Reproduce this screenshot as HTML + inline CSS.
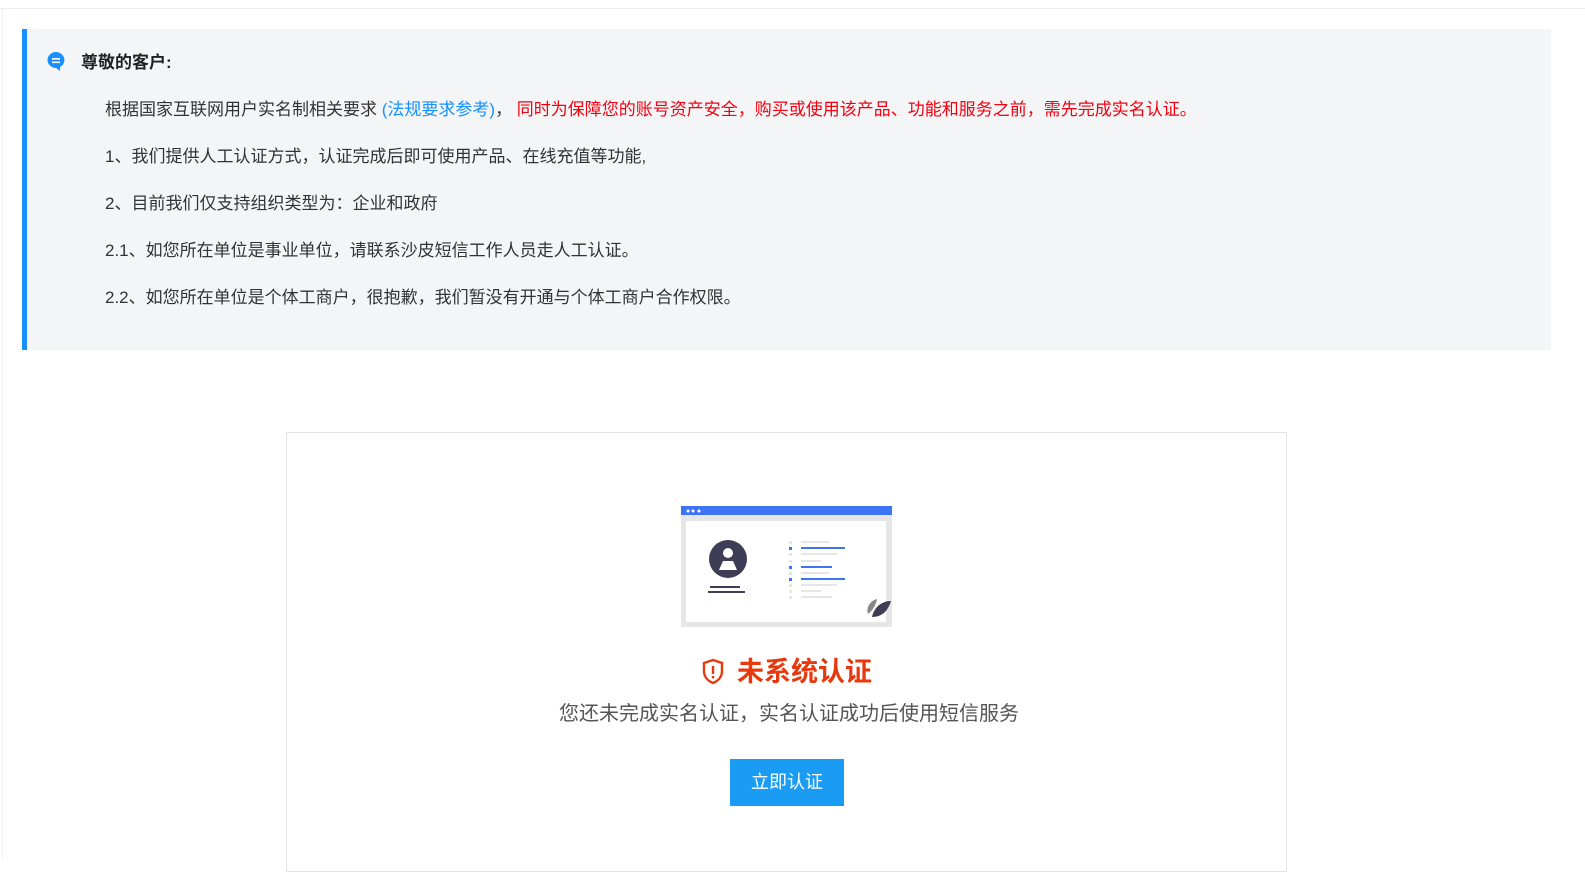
<!DOCTYPE html>
<html><head><meta charset="utf-8"><style>
body{margin:0;width:1585px;height:859px;background:#fff;font-family:"Liberation Sans","Noto Sans CJK SC",sans-serif;position:relative;overflow:hidden;color:#333}
.top{position:absolute;left:0;top:8px;width:1585px;height:1px;background:#eee}
.lft{position:absolute;left:2px;top:9px;width:1px;height:850px;background:#f0f0f0}
.note{position:absolute;left:22px;top:29px;width:1529px;height:321px;background:#f4f5f7;border-left:5px solid #1890ff;box-sizing:border-box}
.t{position:absolute;font-size:17px;white-space:nowrap;line-height:20px}
.card{position:absolute;left:286px;top:432px;width:1001px;height:440px;border:1px solid #e4e4e4;box-sizing:border-box}
.btn{position:absolute;left:730px;top:759px;width:114px;height:47px;background:#1a9cf5;color:#fff;font-size:18px;text-align:center;line-height:47px}
</style></head><body>
<div class="top"></div><div class="lft"></div>
<div class="note"></div>
<svg style="position:absolute;left:46px;top:51px" width="20" height="20" viewBox="0 0 20 20"><path d="M10 1a8.5 8 0 1 0 0 16l4 3v-4A8.5 8 0 0 0 10 1z" fill="#1890ff"/><rect x="6" y="7" width="8" height="1.6" fill="#fff"/><rect x="6" y="10.5" width="8" height="1.6" fill="#fff"/></svg>
<div class="t" style="left:81px;top:53px;font-weight:bold;color:#222">尊敬的客户:</div>
<div class="t" style="left:105px;top:100px">根据国家互联网用户实名制相关要求 <span style="color:#1890ff">(法规要求参考)</span>，&nbsp;<span style="color:#f5000f">同时为保障您的账号资产安全，购买或使用该产品、功能和服务之前，需先完成实名认证。</span></div>
<div class="t" style="left:105px;top:147px">1、我们提供人工认证方式，认证完成后即可使用产品、在线充值等功能,</div>
<div class="t" style="left:105px;top:194px">2、目前我们仅支持组织类型为：企业和政府</div>
<div class="t" style="left:105px;top:241px">2.1、如您所在单位是事业单位，请联系沙皮短信工作人员走人工认证。</div>
<div class="t" style="left:105px;top:288px">2.2、如您所在单位是个体工商户，很抱歉，我们暂没有开通与个体工商户合作权限。</div>
<div class="card"></div>
<svg style="position:absolute;left:681px;top:506px" width="211" height="121" viewBox="0 0 211 121">
<rect x="0" y="0" width="211" height="121" fill="#e6e6e6"/><rect x="0" y="0" width="211" height="9" fill="#3d73f5"/>
<circle cx="7" cy="5" r="1.5" fill="#fff"/><circle cx="12" cy="5" r="1.5" fill="#fff"/><circle cx="18" cy="5" r="1.5" fill="#fff"/>
<rect x="5" y="15" width="200" height="101" fill="#fff"/>
<circle cx="47" cy="53" r="19" fill="#3f3d56"/><circle cx="47" cy="47" r="5" fill="#fff"/><path d="M38 64l4-9h10l4 9z" fill="#fff"/>
<rect x="29" y="80" width="30" height="2" fill="#3f3d56"/><rect x="27" y="85" width="37" height="2" fill="#3f3d56"/>
<g fill="#e6e6e6"><rect x="108" y="35" width="3" height="3"/><rect x="108" y="47" width="3" height="3"/><rect x="108" y="54" width="3" height="3"/><rect x="108" y="66" width="3" height="3"/><rect x="108" y="78" width="3" height="3"/><rect x="108" y="84" width="3" height="3"/><rect x="108" y="90" width="3" height="3"/>
<rect x="120" y="35" width="28" height="2"/><rect x="120" y="47" width="36" height="2"/><rect x="120" y="54" width="20" height="2"/><rect x="120" y="66" width="28" height="2"/><rect x="120" y="78" width="36" height="2"/><rect x="120" y="84" width="20" height="2"/><rect x="120" y="90" width="31" height="2"/></g>
<g fill="#3d73f5"><rect x="108" y="41" width="3" height="3"/><rect x="108" y="60" width="3" height="3"/><rect x="108" y="72" width="3" height="3"/><rect x="120" y="41" width="44" height="2"/><rect x="120" y="60" width="31" height="2"/><rect x="120" y="72" width="44" height="2"/></g>
<path d="M196 93c-8 2-11 10-9 15 5-4 8-9 9-15z" fill="#888"/><path d="M210 95c-9 0-17 6-19 16 10 0 16-6 19-16z" fill="#3f3d56"/>
</svg>
<svg style="position:absolute;left:701px;top:658px" width="24" height="28" viewBox="0 0 24 28"><path d="M12 2l9 3v8c0 6-4 10-9 12-5-2-9-6-9-12V5z" fill="none" stroke="#e8390e" stroke-width="2.4"/><rect x="10.8" y="8" width="2.4" height="8" fill="#e8390e"/><rect x="10.8" y="18" width="2.4" height="2.4" fill="#e8390e"/></svg>
<div class="t" style="left:737px;top:656px;font-size:27px;line-height:32px;font-weight:bold;color:#e8390e">未系统认证</div>
<div class="t" style="left:559px;top:703px;font-size:20px;line-height:22px;color:#555">您还未完成实名认证，实名认证成功后使用短信服务</div>
<div class="btn">立即认证</div>
</body></html>
